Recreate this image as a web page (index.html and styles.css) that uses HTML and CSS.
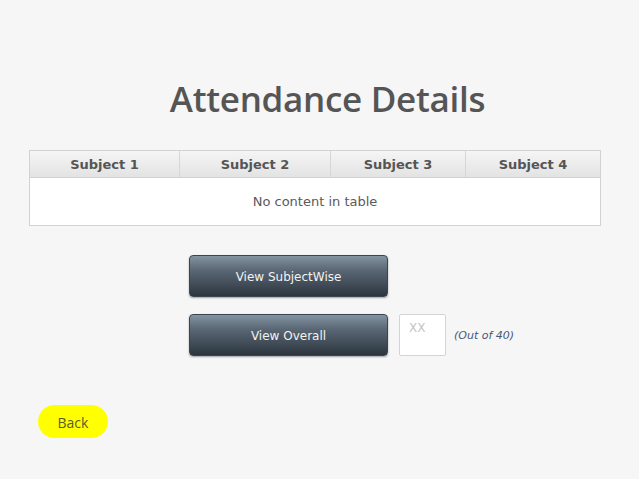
FILE: index.html
```html
<!DOCTYPE html>
<html>
<head>
<meta charset="utf-8">
<link rel="stylesheet" href="styles.css">
</head>
<body>
<div class="page">
  <h1 class="title">Attendance Details</h1>
  <div class="table">
    <div class="thead">
      <div class="th c1">Subject 1</div>
      <div class="th c2">Subject 2</div>
      <div class="th c3">Subject 3</div>
      <div class="th c4">Subject 4</div>
    </div>
    <div class="tbody">No content in table</div>
  </div>
  <div class="actions">
    <button class="btn">View SubjectWise</button>
    <div class="row">
      <button class="btn">View Overall</button>
      <div class="field">XX</div>
      <span class="outof">(Out of 40)</span>
    </div>
  </div>
  <button class="back">Back</button>
</div>
</body>
</html>
```
FILE: styles.css
```css
html, body {
  margin: 0;
  padding: 0;
  background: #f6f6f6;
}
.page {
  width: 639px;
  height: 479px;
  display: flex;
  flex-direction: column;
  font-family: "DejaVu Sans", sans-serif;
}
.title {
  margin: 74px 0 0 0;
  height: 49px;
  line-height: 49px;
  font-family: "Open Sans", sans-serif;
  font-weight: 600;
  font-size: 35px;
  letter-spacing: -0.3px;
  color: #555555;
  text-align: center;
  padding-left: 16px;
}
.table {
  margin: 27px 0 0 29px;
  width: 570px;
  border: 1px solid #d2d2d2;
  background: #ffffff;
}
.thead {
  display: flex;
  height: 26px;
  background: linear-gradient(#f5f5f5, #e3e3e3);
  border-bottom: 1px solid #d2d2d2;
}
.th {
  display: flex;
  align-items: center;
  justify-content: center;
  font-weight: bold;
  font-size: 13px;
  color: #555555;
  border-right: 1px solid #d6d6d6;
  box-sizing: border-box;
}
.c1 { width: 150px; }
.c2 { width: 151px; }
.c3 { width: 135px; }
.c4 { width: 134px; border-right: none; }
.tbody {
  height: 47px;
  display: flex;
  align-items: center;
  justify-content: center;
  font-size: 13px;
  color: #5a5a5a;
}
.actions {
  margin: 29px 0 0 189px;
  display: flex;
  flex-direction: column;
  gap: 17px;
}
.row {
  display: flex;
  align-items: center;
}
.btn {
  width: 199px;
  height: 42px;
  border: 1px solid #3b4550;
  border-radius: 4px;
  background: linear-gradient(#8494a2 0%, #5a6774 35%, #3e4954 75%, #2c353e 100%);
  color: #f2f2f2;
  font-family: "DejaVu Sans", sans-serif;
  font-size: 12px;
  box-shadow: 0 1px 2px rgba(0,0,0,0.35);
  padding: 2px 0 0 0;
}
.field {
  width: 45px;
  height: 40px;
  margin-left: 11px;
  border: 1px solid #d4d4d4;
  border-radius: 2px;
  background: #ffffff;
  color: #c4c4c4;
  font-size: 12px;
  text-indent: 9px;
  line-height: 26px;
}
.outof {
  margin-left: 8px;
  font-size: 11px;
  font-style: italic;
  color: #4a5878;
}
.back {
  margin: 49px 0 0 38px;
  width: 70px;
  height: 33px;
  border: none;
  border-radius: 17px;
  background: #ffff00;
  color: #5a5a30;
  font-family: "Open Sans", sans-serif;
  font-size: 14px;
  padding: 2px 0 0 0;
}
```
